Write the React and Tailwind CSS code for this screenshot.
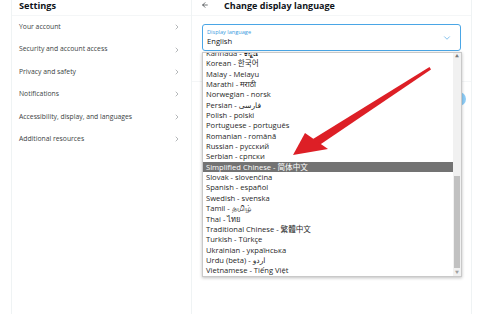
import React from "react";
import { ChevronRight, ChevronDown, ArrowLeft } from "lucide-react";

const menu = [
    "Your account",
    "Security and account access",
    "Privacy and safety",
    "Notifications",
    "Accessibility, display, and languages",
    "Additional resources",
];

const languages = [
    "Kannada - ಕನ್ನಡ",
    "Korean - 한국어",
    "Malay - Melayu",
    "Marathi - मराठी",
    "Norwegian - norsk",
    "Persian - فارسی",
    "Polish - polski",
    "Portuguese - português",
    "Romanian - română",
    "Russian - русский",
    "Serbian - српски",
    "Simplified Chinese - 简体中文",
    "Slovak - slovenčina",
    "Spanish - español",
    "Swedish - svenska",
    "Tamil - தமிழ்",
    "Thai - ไทย",
    "Traditional Chinese - 繁體中文",
    "Turkish - Türkçe",
    "Ukrainian - українська",
    "Urdu (beta) - اردو",
    "Vietnamese - Tiếng Việt",
];

export default function App() {
    return (
        <div
            className="relative w-[500px] h-[314px] overflow-hidden bg-white flex"
            style={{ fontFamily: '"Open Sans", "Noto Sans", "Noto Sans CJK KR", "DejaVu Sans", sans-serif' }}
        >
            <div className="w-[11px]" />

            {/* Settings column */}
            <div className="w-[181px] border-x border-[#eff3f4] flex flex-col">
                <div className="h-[16px] border-b border-[#f4f6f7] flex items-start px-[7px]">
                    <span className="text-[9.2px] font-bold text-[#0f1419] leading-[11px]">Settings</span>
                </div>
                <div className="flex flex-col">
                    {menu.map((item) => (
                        <div key={item} className="h-[22.4px] flex items-center justify-between pl-[7px] pr-[10px]">
                            <span className="text-[6.8px] text-[#3b3f44]">{item}</span>
                            <ChevronRight size={8} strokeWidth={1.5} className="text-[#6b7075]" />
                        </div>
                    ))}
                </div>
            </div>

            {/* Language column */}
            <div className="relative w-[280px] border-r border-[#eff3f4] flex flex-col">
                <div className="h-[16px] border-b border-[#f4f6f7] flex items-start gap-[15px] pl-[9px]">
                    <ArrowLeft size={8} strokeWidth={1.8} className="text-[#0f1419] mt-[1px]" />
                    <span className="text-[9px] font-bold text-[#0f1419] leading-[11px]">Change display language</span>
                </div>
                <div className="px-[10px] pt-[8px]">
                    <div className="h-[27px] border border-[#4aa6e6] rounded-[3px] flex items-center justify-between pl-[4px] pr-[8px]">
                        <div className="flex flex-col leading-none">
                            <span className="text-[5.6px] text-[#3a9be0]">Display language</span>
                            <span className="text-[7.6px] text-[#0f1419] mt-[2px]">English</span>
                        </div>
                        <ChevronDown size={10} strokeWidth={1.5} className="text-[#3a9be0]" />
                    </div>
                </div>
                <div className="mt-[30px] border-b border-[#f4f6f7]" />
                <div className="mt-[10px] ml-auto mr-[5px] w-[40px] h-[14px] rounded-full bg-[#8ecdf7]" />

                {/* Open dropdown list */}
                <div className="absolute left-[10px] top-[52px] w-[260px] h-[225px] bg-white border border-[#c9c9c9] shadow-[0_1px_3px_rgba(0,0,0,0.25)] flex overflow-hidden">
                    <div className="flex-1 overflow-hidden">
                        <div className="-mt-[5px]">
                            {languages.map((lang) => (
                                <div
                                    key={lang}
                                    className={
                                        lang.startsWith("Simplified")
                                            ? "h-[10.35px] leading-[10.35px] pl-[3px] text-[7.6px] bg-[#737373] text-white whitespace-nowrap"
                                            : "h-[10.35px] leading-[10.35px] pl-[3px] text-[7.6px] text-[#1f1f1f] whitespace-nowrap"
                                    }
                                >
                                    {lang}
                                </div>
                            ))}
                        </div>
                    </div>
                    <div className="w-[8px] bg-[#f1f1f1] flex flex-col items-center">
                        <span className="text-[4px] text-[#7a7a7a] leading-none mt-[2px]">▲</span>
                        <div className="mt-[117px] w-[6px] h-[92px] bg-[#c1c1c1]" />
                        <span className="text-[4px] text-[#a0a0a0] leading-none mt-[3px]">▼</span>
                    </div>
                </div>
            </div>

            {/* Annotation arrow */}
            <svg className="absolute inset-0 pointer-events-none" width="500" height="314" viewBox="0 0 500 314">
                <polygon points="429.5,67 431,69.5 318,146 313,139" fill="#dd1f26" />
                <polygon points="293,155 305,133 328,149" fill="#dd1f26" />
            </svg>
        </div>
    );
}
